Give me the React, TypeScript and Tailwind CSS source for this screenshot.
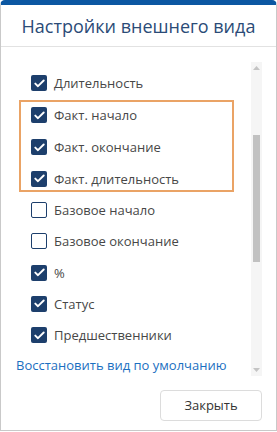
import React from 'react';

type Item = { label: string; checked: boolean; h: number };

const before: Item[] = [{ label: 'Длительность', checked: true, h: 32 }];
const highlighted: Item[] = [
  { label: 'Факт. начало', checked: true, h: 32 },
  { label: 'Факт. окончание', checked: true, h: 32 },
  { label: 'Факт. длительность', checked: true, h: 31 },
];
const after: Item[] = [
  { label: 'Базовое начало', checked: false, h: 31 },
  { label: 'Базовое окончание', checked: false, h: 32 },
  { label: '%', checked: true, h: 31 },
  { label: 'Статус', checked: true, h: 31 },
  { label: 'Предшественники', checked: true, h: 32 },
];

const CheckBox: React.FC<{ checked: boolean }> = ({ checked }) =>
  checked ? (
    <span className="w-4 h-4 rounded-[2px] bg-[#1d3f6c] flex items-center justify-center shrink-0">
      <svg width="11" height="9" viewBox="0 0 11 9" fill="none">
        <path d="M1.3 4.6 L4 7.2 L9.7 1.5" stroke="white" strokeWidth="1.9" strokeLinecap="round" strokeLinejoin="round" />
      </svg>
    </span>
  ) : (
    <span className="w-4 h-4 rounded-[2px] border-[1.5px] border-[#1d3f6c] bg-white shrink-0" />
  );

const Row: React.FC<{ item: Item }> = ({ item }) => (
  <div className="flex items-center gap-[7px] pl-[15px]" style={{ height: item.h }}>
    <CheckBox checked={item.checked} />
    <span className="text-[13px] text-[#474747] leading-none pt-[1px]">{item.label}</span>
  </div>
);

const App: React.FC = () => {
  return (
    <div className="w-[277px] h-[432px] bg-white" style={{ fontFamily: '"Open Sans", "Noto Sans", sans-serif' }}>
      <div className="w-[277px] h-[431px] border border-[#c9c9c9] border-t-[5px] border-t-[#0c57a2] rounded-t-[5px] flex flex-col">
        {/* Header */}
        <div className="h-[42px] shrink-0 flex items-center justify-center border-b border-[#e2e2e2]">
          <h1 className="text-[18px] text-[#2b4b77] pt-[1px]">Настройки внешнего вида</h1>
        </div>

        {/* Scroll area */}
        <div className="mt-[15px] h-[314px] shrink-0 flex">
          <div className="flex-1 pl-[15px] pt-[5px]">
            {before.map(i => <Row key={i.label} item={i} />)}
            <div className="relative">
              <div className="absolute left-[3px] w-[215px] top-[1px] bottom-[2px] border-2 border-[#eaa365] pointer-events-none" />
              {highlighted.map(i => <Row key={i.label} item={i} />)}
            </div>
            {after.map(i => <Row key={i.label} item={i} />)}
            <div className="mt-[5px] h-[20px] flex items-center">
              <span className="text-[13px] text-[#1b6fc1]">Восстановить вид по умолчанию</span>
            </div>
          </div>

          {/* Scrollbar */}
          <div className="w-[11px] mr-[14px] bg-[#f5f5f5] flex flex-col items-center shrink-0">
            <div className="h-[12px] shrink-0 flex items-center justify-center">
              <svg width="7" height="4" viewBox="0 0 7 4"><path d="M3.5 0 L7 4 L0 4 Z" fill="#c4c4c4" /></svg>
            </div>
            <div className="mt-[61px] w-[7px] h-[127px] shrink-0 bg-[#c1c1c1]" />
            <div className="flex-1" />
            <div className="h-[12px] shrink-0 flex items-center justify-center">
              <svg width="7" height="4" viewBox="0 0 7 4"><path d="M0 0 L7 0 L3.5 4 Z" fill="#c4c4c4" /></svg>
            </div>
          </div>
        </div>

        {/* Footer */}
        <div className="flex justify-end pr-[14px] mt-[14px]">
          <button className="w-[102px] h-[31px] border border-[#dcdcdc] rounded-[4px] bg-white text-[13px] text-[#333333]">
            Закрыть
          </button>
        </div>
      </div>
    </div>
  );
};

export default App;
